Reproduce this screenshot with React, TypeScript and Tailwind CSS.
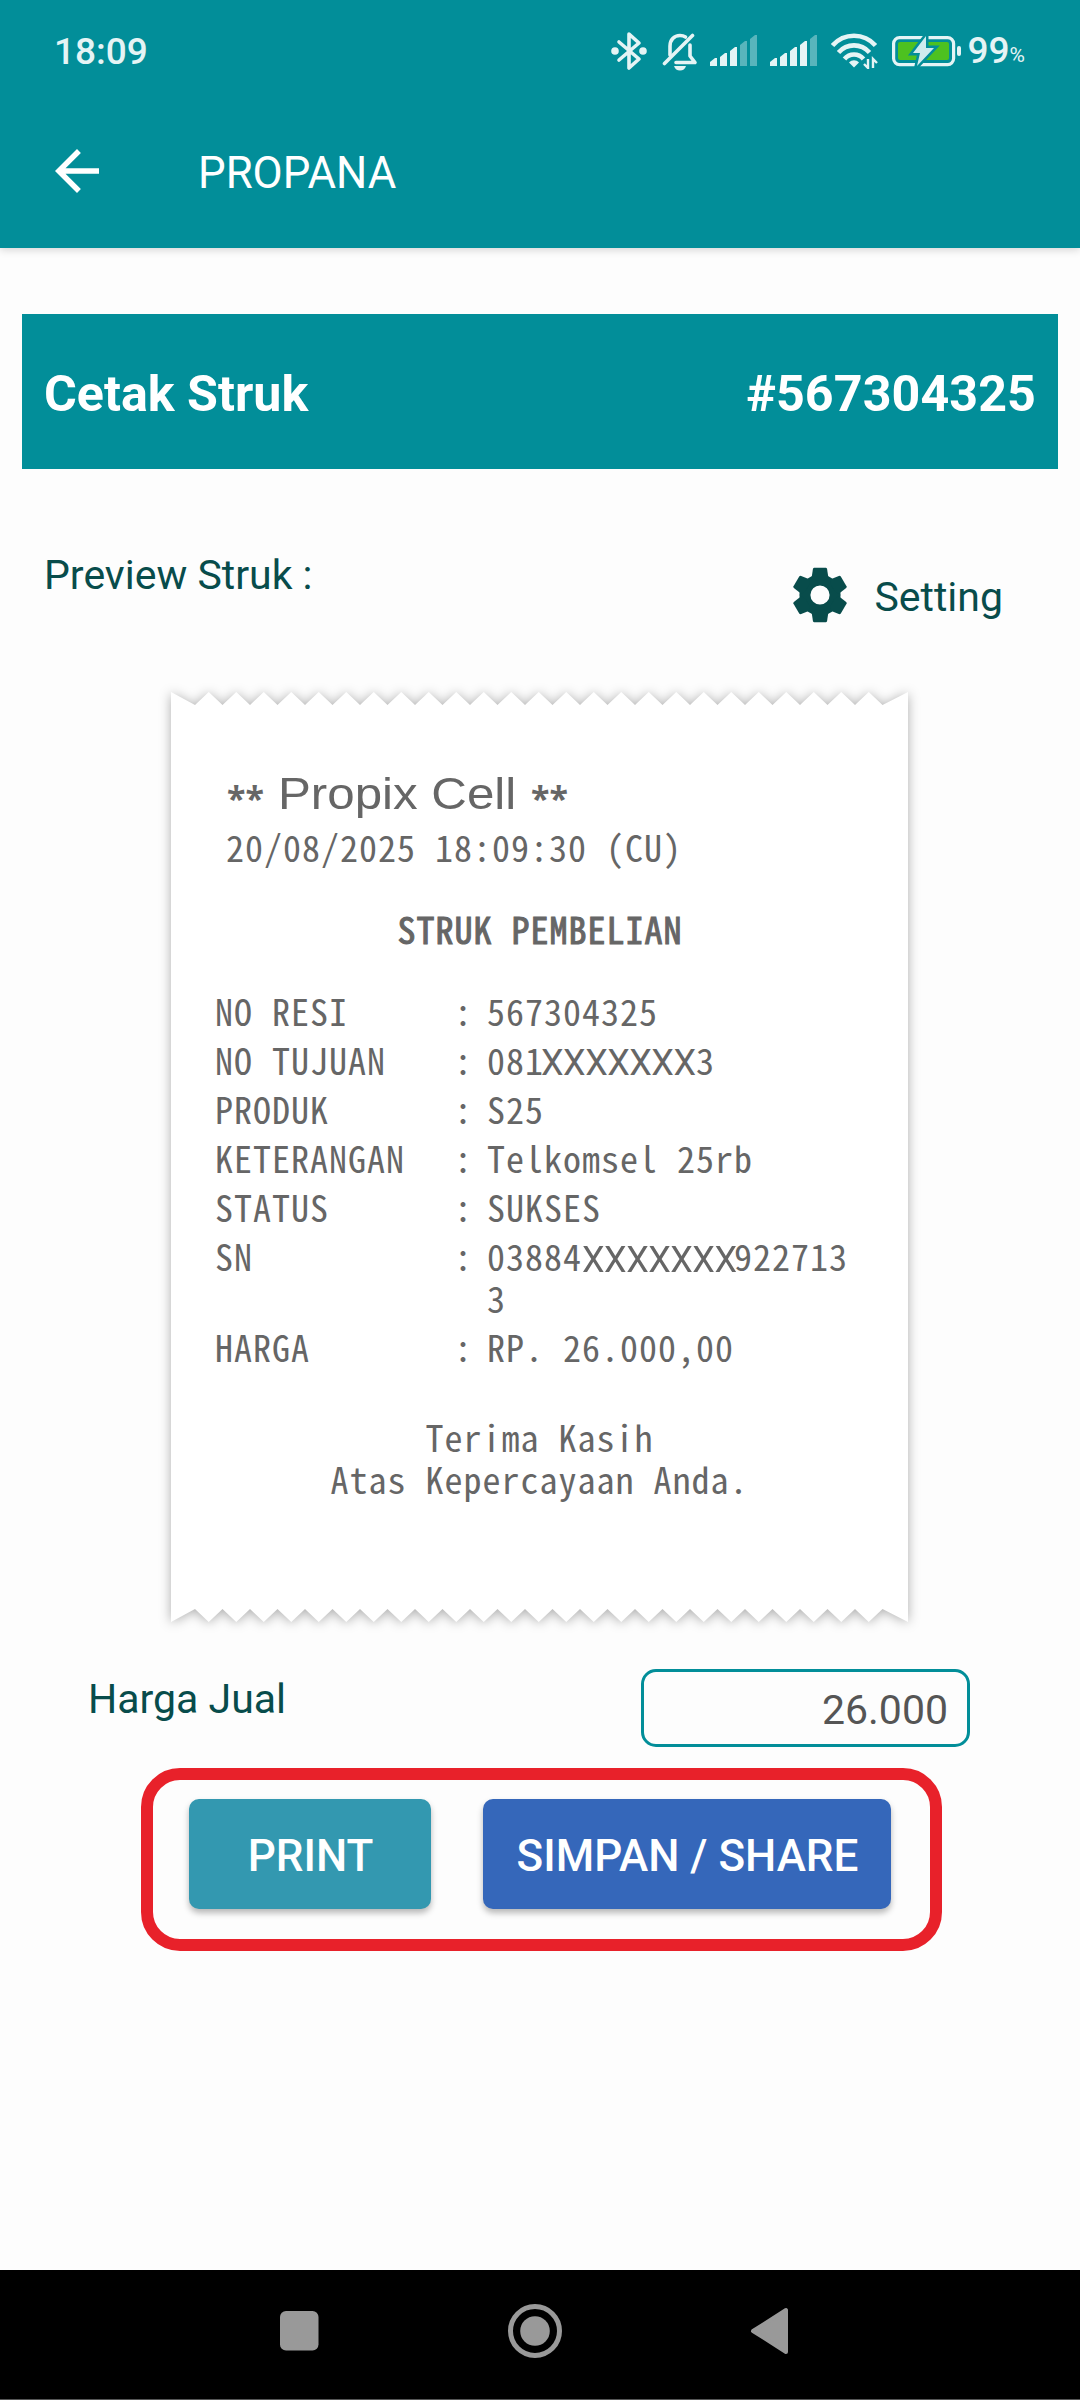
import type { ReactNode } from "react";

type Row = { label: string; value: ReactNode };

const ROWS: Row[] = [
  { label: "NO RESI", value: "567304325" },
  { label: "NO TUJUAN", value: <>081<Masked className="-ml-[3px] w-[155px]" />3</> },
  { label: "PRODUK", value: "S25" },
  { label: "KETERANGAN", value: "Telkomsel 25rb" },
  { label: "STATUS", value: "SUKSES" },
  { label: "SN", value: <>03884<Masked className="relative top-px w-[152px]" />922713<br />3</> },
  { label: "HARGA", value: "RP. 26.000,00" },
];

// Torn paper outline: 25 teeth of 27.5px between two wider corner cuts
const WIDTH = 737;
const HEIGHT = 930;
const valleys = Array.from({ length: 26 }, (_, i) => 24 + i * 27.5);
const top = valleys.flatMap((x, i) => (i < 25 ? [[x, 13], [x + 13.75, 0]] : [[x, 13]]));
const bottom = top.map(([x, y]) => [x, HEIGHT - y]).reverse();
const outline = [[0, 0], ...top, [WIDTH, 0], [WIDTH, HEIGHT], ...bottom, [0, HEIGHT]];
const paperClip = `polygon(${outline.map(([x, y]) => `${x}px ${y}px`).join(",")})`;

export default function App() {
  return (
    <div className="flex h-[2400px] w-[1080px] flex-col overflow-hidden bg-[#fdfdfd] font-[Roboto,sans-serif]">
      <header className="bg-[#028e99] text-white shadow-[0_2px_8px_rgba(0,0,0,0.16)]">
        <StatusBar />
        <div className="flex h-[152px] items-center pl-[44px]">
          <button type="button" aria-label="Back" className="-mt-[2px]">
            <svg width="66" height="66" viewBox="0 0 24 24" fill="currentColor">
              <path d="M20 11H7.83l5.59-5.59L12 4l-8 8 8 8 1.41-1.41L7.83 13H20v-2z" />
            </svg>
          </button>
          <h1 className="mt-[2px] ml-[88px] text-[43.8px] leading-[52px]">PROPANA</h1>
        </div>
      </header>

      <main className="flex flex-1 flex-col">
        <div className="mx-[22px] mt-[66px] flex h-[155px] items-center justify-between bg-[#028e99] px-[22px] pt-[5px] text-[50.2px] leading-[60px] font-bold text-white">
          <span>Cetak Struk</span>
          <span className="tracking-[0.1px]">#567304325</span>
        </div>

        <div className="mt-[81px] flex items-start justify-between pr-[77px] pl-[44px] text-[41px] leading-[50px] text-[#084c4b]">
          <span>Preview Struk :</span>
          <button type="button" className="mt-[17px] flex items-center">
            <GearIcon />
            <span className="mt-[4px] ml-[26px]">Setting</span>
          </button>
        </div>

        <Receipt />

        <div className="mt-[47px] flex justify-between pr-[110px] pl-[88px] text-[41px] leading-[50px] text-[#084c4b]">
          <span className="mt-[5px]">Harga Jual</span>
          <input
            readOnly
            value="26.000"
            aria-label="Harga Jual"
            className="h-[78px] w-[329px] rounded-[15px] border-[3px] border-[#028e99] pt-[3px] pr-[19px] text-right text-[#555]"
          />
        </div>

        <div className="mt-[21px] ml-[141px] flex h-[183px] w-[801px] rounded-[39px] border-[12px] border-[#e8212a] pt-[19px] pl-[36px] text-[44px] font-medium text-white">
          <button type="button" className="h-[110px] w-[242px] rounded-[10px] bg-[#3398b0] pt-[4px] pl-px shadow-[0_4px_6px_rgba(0,0,0,0.28)]">
            PRINT
          </button>
          <button type="button" className="ml-[52px] h-[110px] w-[408px] rounded-[10px] bg-[#3567ba] pt-[4px] pl-px shadow-[0_4px_6px_rgba(0,0,0,0.28)]">
            SIMPAN / SHARE
          </button>
        </div>
      </main>

      <nav className="h-[130px] border-b border-[#555] bg-black text-[#999]">
        <svg width="1080" height="129" fill="currentColor">
          <rect x="280" y="41" width="38.5" height="39.5" rx="6" />
          <circle cx="535" cy="61" r="24.5" fill="none" stroke="currentColor" strokeWidth="5" />
          <circle cx="535" cy="61" r="14.8" />
          <path d="M753 61L786 40v42z" stroke="currentColor" strokeWidth="4" strokeLinejoin="round" />
        </svg>
      </nav>
    </div>
  );
}

function Receipt() {
  return (
    <section className="mt-[69px] ml-[171px] drop-shadow-[0_1px_6px_rgba(0,0,0,0.32)]">
      <div
        className="h-[930px] w-[737px] bg-white pt-[75px] font-['Noto_Sans_Mono_CJK_SC',monospace] text-[36px] leading-[42px] tracking-[1px] text-[#666]"
        style={{ clipPath: paperClip }}
      >
        <div className="flex h-[54px] items-center pl-[56px]">
          <Stars />
          <span className="ml-[13px] w-[253px] origin-left scale-x-[1.12] font-['Liberation_Sans',sans-serif] text-[44px] tracking-normal">
            Propix Cell
          </span>
          <Stars />
        </div>
        <p className="mt-[4px] pl-[55px]">20/08/2025 18:09:30 (CU)</p>
        <p className="mt-[40px] pl-px text-center [-webkit-text-stroke:1px_#666]">STRUK PEMBELIAN</p>
        <dl className="mt-[40px] flex flex-col gap-[7px] pl-[44px]">
          {ROWS.map((row) => (
            <div key={row.label} className="flex">
              <dt className="w-[239px]">{row.label}</dt>
              <dd className="w-[33px]">:</dd>
              <dd>{row.value}</dd>
            </div>
          ))}
        </dl>
        <p className="mt-[48px] text-center">
          Terima Kasih
          <br />
          Atas Kepercayaan Anda.
        </p>
      </div>
    </section>
  );
}

function Stars() {
  return <b className="mt-[7px] w-[38px] font-['Noto_Sans',sans-serif] text-[34px] tracking-normal">**</b>;
}

function Masked({ className }: { className: string }) {
  return (
    <span className={`inline-block font-[Roboto,sans-serif] text-[36px] leading-[30px] tracking-[-0.5px] ${className}`}>
      XXXXXXX
    </span>
  );
}

function GearIcon() {
  return (
    <svg width="56" height="56" viewBox="-28 -28 56 56" fill="currentColor">
      <circle r="15.100" fill="none" stroke="currentColor" strokeWidth="11" />
      {[0, 60, 120, 180, 240, 300].map((deg) => (
        <path key={deg} d="M-6-27.300h12l1 .8 1.500 10-5 2h-7l-5-2 1.500-10z" transform={`rotate(${deg})`} />
      ))}
    </svg>
  );
}

function StatusBar() {
  return (
    <div className="flex h-[96px] items-center pt-[6px] pr-[55px] pl-[54px] text-[#e5f4f5]">
      <span className="mt-px text-[37px] leading-[44px] font-medium">18:09</span>
      <div className="ml-auto flex items-center">
        <svg width="36" height="40" viewBox="0 0 36 40" fill="none" stroke="currentColor" strokeWidth="3.6" strokeLinejoin="round" strokeLinecap="round">
          <path d="M8 11L28 28 18 37V3l10 9L8 29" />
          <circle cx="4" cy="20" r="2" fill="currentColor" />
          <circle cx="32" cy="20" r="2" fill="currentColor" />
        </svg>
        <svg className="ml-[15px]" width="36" height="40" viewBox="0 0 36 40" fill="none" stroke="currentColor" strokeWidth="3.6" strokeLinecap="round" strokeLinejoin="round">
          <path d="M2.500 32.500L30.500 4.500" />
          <path d="M8 24V15c0-6 4-10.500 10-10.500 2 0 4 .5 5.500 1.500" />
          <path d="M28 14v11l5 6.500H14" />
          <path d="M12 35h12c-1 3-3 4.500-6 4.500S13 38 12 35z" fill="currentColor" stroke="none" />
        </svg>
        <Signal lit={3} className="ml-[12px]" />
        <Signal lit={4} className="ml-[12px]" />
        <svg className="ml-[13px]" width="47" height="36" viewBox="0 0 47 36" fill="none" stroke="currentColor" strokeWidth="4.6">
          <path d="M1.500 12.500C13-.5 33-.5 44.500 12.500" />
          <path d="M7.500 19.500C16 10 30 10 38.500 19.500" />
          <path d="M13.500 26C18.500 20 27.500 20 32.500 26" />
          <path d="M18 29.500c3-3 7-3 10 0l-5 5z" fill="currentColor" stroke="none" />
          <path d="M37 26v9l-4-4M42 35v-9l4 4" strokeWidth="2.400" />
        </svg>
        <svg className="ml-[14px]" width="70" height="32" viewBox="0 0 70 32">
          <rect x="1.600" y="2.600" width="60" height="27" rx="6" fill="none" stroke="currentColor" strokeWidth="3.200" />
          <rect x="6" y="7" width="51" height="18" rx="2" fill="#4dc120" />
          <path
            d="M35 1L22 18h7l-3 13 17-18h-8z"
            transform="translate(-1)"
            fill="#cfecee"
            stroke="#028e99"
            strokeWidth="5"
            paintOrder="stroke"
          />
          <rect x="65" y="11" width="4" height="10" rx="2" fill="currentColor" />
        </svg>
        <span className="ml-[6px] text-[37px] leading-[44px] font-medium">99</span>
        <span className="mt-[10px] text-[21px]">%</span>
      </div>
    </div>
  );
}

function Signal({ lit, className }: { lit: number; className: string }) {
  return (
    <svg className={className} width="48" height="32" viewBox="0 0 48 32" fill="currentColor">
      {[8, 13, 19, 25, 31].map((h, i) => (
        <path
          key={h}
          d={`M${i * 10} ${31}v${4 - h}l5-4h2v${h}z`}
          opacity={i < lit ? 1 : 0.38}
        />
      ))}
    </svg>
  );
}
